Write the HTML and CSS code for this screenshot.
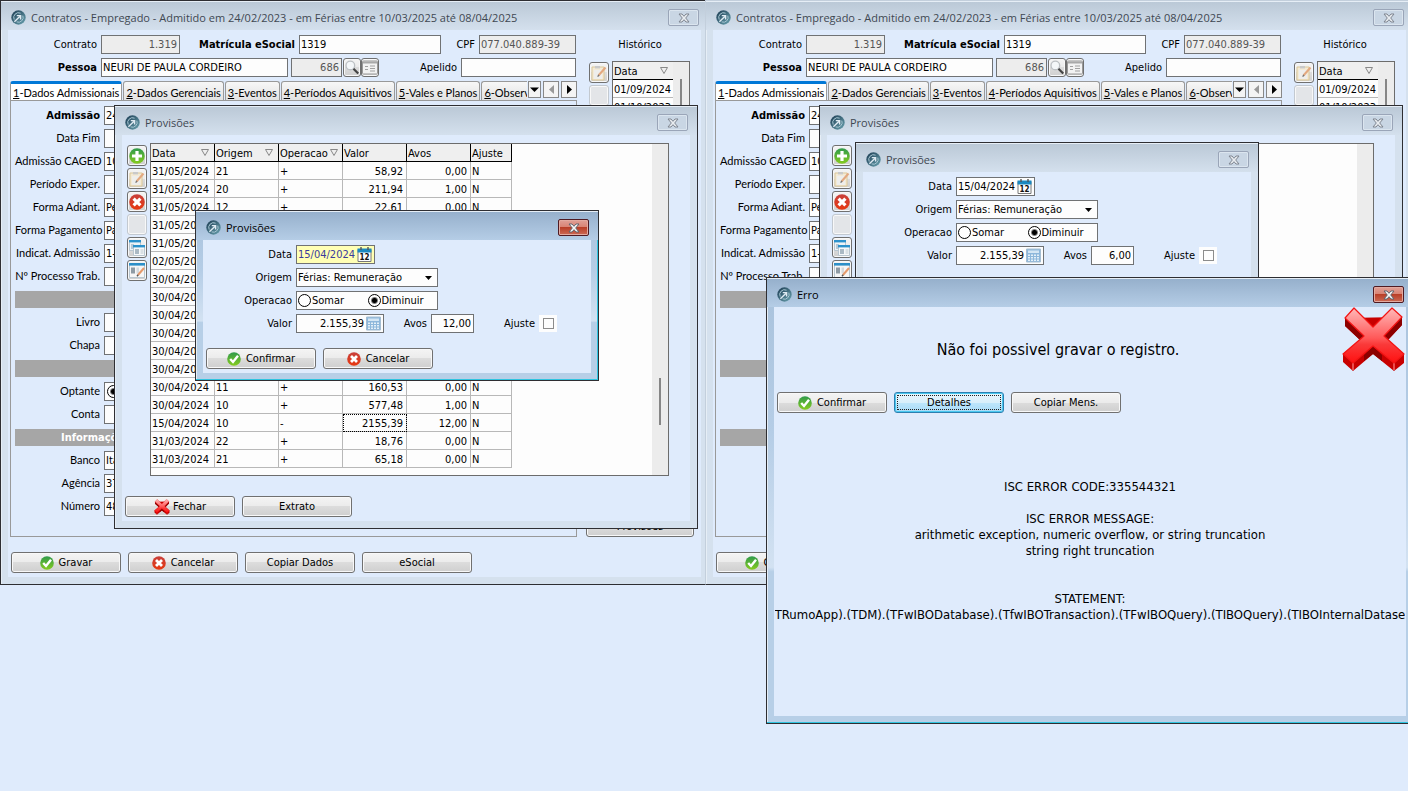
FILE: index.html
```
<!DOCTYPE html>
<html lang="pt-BR">
<head>
    <meta charset="UTF-8">
    <meta name="viewport" content="width=device-width, initial-scale=1.0">
    <title>Contratos - Provisões</title>
    <link rel="stylesheet" href="styles.css">
</head>
<body>
    <!-- shared icons -->
    <svg class="sprite" aria-hidden="true">
        <defs>
            <linearGradient id="g-logo" x1="0" y1="0" x2="1" y2="1"><stop offset="0" stop-color="#1c3b52"/><stop offset="1" stop-color="#6aa3b0"/></linearGradient>
            <linearGradient id="g-green" x1="0" y1="0" x2="0" y2="1"><stop offset="0" stop-color="#2f9a4c"/><stop offset="1" stop-color="#86cc1e"/></linearGradient>
            <linearGradient id="g-red" x1="0" y1="0" x2="0" y2="1"><stop offset="0" stop-color="#c8403c"/><stop offset="1" stop-color="#e8380f"/></linearGradient>
            <linearGradient id="g-cross" x1="0" y1="0" x2="0" y2="1"><stop offset="0" stop-color="#ffb9b9"/><stop offset="0.55" stop-color="#ff5858"/><stop offset="0.66" stop-color="#fa3a3a"/><stop offset="1" stop-color="#ff1010"/></linearGradient>
        </defs>
        <symbol id="i-logo" viewBox="0 0 15 15">
            <circle cx="7.5" cy="7.5" r="7.2" fill="url(#g-logo)"/>
            <path d="M3.2 9.600A4.800 4.800 0 0 1 9.600 3.200M11.800 5.600A4.800 4.800 0 0 1 5.600 11.900" fill="none" stroke="#a9c8d4" stroke-width="1"/>
            <path d="M3.400 11.800L8.800 6.400M5.800 5.600H9.600V9.400" fill="none" stroke="#dfeaf2" stroke-width="1.400"/>
        </symbol>
        <symbol id="i-close" viewBox="0 0 12 10">
            <path d="M1 1h3l2 2.3L8 1h3L7.7 5 11 9H8L6 6.7 4 9H1l3.3-4z" fill="#f6f6f6" stroke="#60646e" stroke-width="1"/>
        </symbol>
        <symbol id="i-ok" viewBox="0 0 14 14">
            <circle cx="7" cy="7" r="6.8" fill="url(#g-green)"/>
            <path d="M3.2 7L6 10L11 3.8" fill="none" stroke="#fff" stroke-width="2.4"/>
        </symbol>
        <symbol id="i-no" viewBox="0 0 14 14">
            <circle cx="7" cy="7" r="6.8" fill="url(#g-red)"/>
            <path d="M4 4l6 6M10 4l-6 6" stroke="#fff" stroke-width="2.8"/>
        </symbol>
        <symbol id="i-add" viewBox="0 0 14 14">
            <circle cx="7" cy="7" r="6.8" fill="url(#g-green)"/>
            <path d="M7 2.6v8.8M2.6 7h8.8" stroke="#fff" stroke-width="2.8"/>
        </symbol>
        <symbol id="i-note" viewBox="0 0 16 16">
            <path d="M1 2h12v13H1z" fill="#f3ead6" stroke="#dcc898"/>
            <path d="M4 1h5v2.4H4z" fill="#c9c9c9"/>
            <path d="M3 5h8v9H3z" fill="#eeeeec"/>
            <path d="M7.5 10.5L14.5 2.5" stroke="#e3a980" stroke-width="2"/>
            <path d="M6.6 11.6l1.4-1.6" stroke="#777" stroke-width="1.4"/>
        </symbol>
        <symbol id="i-windows" viewBox="0 0 16 16">
            <path d="M.5 .5h11v10H.5z" fill="#eef3f6" stroke="#b8c6d0"/><path d="M0 0h12v2.4H0z" fill="#2c92cc"/>
            <path d="M2 4h3v5H2z" fill="#b5c9d6"/>
            <path d="M4.500 5.500h11v10h-11z" fill="#f6f8f9" stroke="#b8c6d0"/><path d="M4 5h12v2.4H4z" fill="#2c92cc"/>
            <path d="M6 9h4v5H6z" fill="#aab9c4"/><path d="M11.500 9h3v5h-3z" fill="#d9e0e4"/>
        </symbol>
        <symbol id="i-form" viewBox="0 0 16 16">
            <path d="M.5 .5h15v14H.5z" fill="#f6f6f6" stroke="#b8c6d0"/><path d="M0 0h16v2.600H0z" fill="#2c8fc8"/>
            <path d="M2 4.500h4v6H2z" fill="#8f9ba4"/><path d="M7.500 4.500H10v6H7.500z" fill="#d5dade"/>
            <path d="M9 12L15 5" stroke="#e59a6c" stroke-width="2"/><path d="M8 13.200l1.200-1.400" stroke="#555" stroke-width="1.4"/>
        </symbol>
        <symbol id="i-search" viewBox="0 0 18 18">
            <circle cx="7" cy="6.500" r="5.200" fill="#f4f7f9" stroke="#bcc0c4" stroke-width="1.6"/>
            <path d="M10.800 10.400L16.500 16.300" stroke="#444" stroke-width="2.6"/>
        </symbol>
        <symbol id="i-card" viewBox="0 0 16 14">
            <rect x=".5" y=".5" width="15" height="13" rx="1" fill="#f2f2f2" stroke="#999"/><path d="M1 1h14v2H1z" fill="#a8a8a8"/>
            <path d="M3 6h3M3 9h3M8 5.500h5M8 8h5M8 10.500h5" stroke="#a0a0a0"/>
        </symbol>
        <symbol id="i-calendar" viewBox="0 0 14 15">
            <path d="M.5 2.500h13v12H.5z" fill="#fff" stroke="#777"/><path d="M0 1.500h14v4H0z" fill="#1b88c0"/>
            <path d="M3.500 0v3M10.500 0v3" stroke="#555" stroke-width="1.4"/>
            <text x="7" y="13" text-anchor="middle" font-family="DejaVu Sans Condensed" font-size="8" font-weight="bold" fill="#111">12</text>
        </symbol>
        <symbol id="i-calc" viewBox="0 0 15 14">
            <path d="M.5 .5h14v13H.5z" fill="#8db7db" stroke="#a4bdd2"/><path d="M2 2h11v2.500H2z" fill="#d4e6f4"/>
            <path d="M2 6h2v1.500H2zM5 6h2v1.500H5zM8 6h2v1.500H8zM11 6h2v1.500h-2zM2 8.500h2V10H2zM5 8.500h2V10H5zM8 8.500h2V10H8zM11 8.500h2V10h-2zM2 11h2v1.500H2zM5 11h2v1.500H5zM8 11h2v1.500H8zM11 11h2v1.500h-2z" fill="#e4f0f8"/>
        </symbol>
        <symbol id="i-filter" viewBox="0 0 8 7">
            <path d="M.5 .5h7L4 6.500z" fill="none" stroke="#888"/>
        </symbol>
        <symbol id="i-cross" viewBox="0 0 63 65">
            <path d="M3 11v8l15 14L1 47v8l10 9 20-17 21 17 10-8v-9L46 33l14-15v-8z" fill="#c80000"/>
            <path d="M3 11v8l15 14 4-4zM60 10v8L46 33l-4-4zM31 39l-9 9v6l9-7 9 7v-6z" fill="#8c0000"/>
            <path d="M11 56v7M52 56v7" stroke="#ff8080" stroke-width="1.200"/>
            <path d="M12 1L31 20 50 1l10 9-18 19 20 18-10 9-21-17-20 17-10-9 21-18L3 11z" fill="url(#g-cross)" stroke="#f41414" stroke-width="1.200" stroke-linejoin="round"/>
        </symbol>
    </svg>

    <main class="desktop">

        <!-- left: contract -->
        <section class="window contract contract-a">
            <header class="title-bar">
                <svg class="logo"><use href="#i-logo"/></svg>
                <h1>Contratos - Empregado - Admitido em 24/02/2023 - em Férias entre 10/03/2025 até 08/04/2025</h1>
                <button class="close" aria-label="Fechar"><svg><use href="#i-close"/></svg></button>
            </header>
            <div class="client">
                <div class="columns">
                    <div class="main-col">
                        <div class="row">
                            <label class="w-first" for="a-contrato">Contrato</label>
                            <input class="w-79 num" id="a-contrato" value="1.319" readonly>
                            <label class="bold grow" for="a-matricula">Matrícula eSocial</label>
                            <input class="w-142" id="a-matricula" value="1319">
                            <label class="w-cpf" for="a-cpf">CPF</label>
                            <input class="w-97" id="a-cpf" value="077.040.889-39" readonly>
                        </div>
                        <div class="row">
                            <label class="w-first bold" for="a-pessoa">Pessoa</label>
                            <input class="w-187" id="a-pessoa" value="NEURI DE PAULA CORDEIRO">
                            <input class="w-51 num code" aria-label="Código da pessoa" value="686" readonly>
                            <button class="mini" aria-label="Pesquisar"><svg><use href="#i-search"/></svg></button>
                            <button class="mini" aria-label="Cadastro"><svg><use href="#i-card"/></svg></button>
                            <label class="grow" for="a-apelido">Apelido</label>
                            <input class="w-115" id="a-apelido">
                        </div>
                        <nav class="tabs">
                            <button class="tab active"><u>1</u>-Dados Admissionais</button>
                            <button class="tab"><u>2</u>-Dados Gerenciais</button>
                            <button class="tab"><u>3</u>-Eventos</button>
                            <button class="tab"><u>4</u>-Períodos Aquisitivos</button>
                            <button class="tab"><u>5</u>-Vales e Planos</button>
                            <button class="tab cut"><u>6</u>-Observ</button>
                            <button class="tab-arrow" aria-label="Lista de abas"><svg viewBox="0 0 9 9"><path d="M0 2.500h9L4.500 7z"/></svg></button>
                            <button class="tab-arrow wide off" aria-label="Anterior"><svg viewBox="0 0 9 9"><path d="M7 0v9L2 4.500z"/></svg></button>
                            <button class="tab-arrow wide" aria-label="Próxima"><svg viewBox="0 0 9 9"><path d="M2 0v9l5-4.500z"/></svg></button>
                        </nav>
                        <div class="page">
                            <div class="row"><label class="bold" for="a-adm">Admissão</label><input id="a-adm" value="24/02/2023"></div>
                            <div class="row"><label for="a-fim">Data Fim</label><input id="a-fim"></div>
                            <div class="row"><label for="a-caged">Admissão CAGED</label><input id="a-caged" value="10"></div>
                            <div class="row"><label for="a-exper">Período Exper.</label><input id="a-exper"></div>
                            <div class="row"><label for="a-adiant">Forma Adiant.</label><input id="a-adiant" value="Pe"></div>
                            <div class="row"><label for="a-pag">Forma Pagamento</label><input id="a-pag" value="Pa"></div>
                            <div class="row"><label for="a-indic">Indicat. Admissão</label><input id="a-indic" value="1-"></div>
                            <div class="row"><label for="a-proc">Nº Processo Trab.</label><input id="a-proc"></div>
                            <div class="band"></div>
                            <div class="row"><label for="a-livro">Livro</label><input id="a-livro"></div>
                            <div class="row"><label for="a-chapa">Chapa</label><input id="a-chapa"></div>
                            <div class="band"></div>
                            <div class="row"><label for="a-optante">Optante</label><span class="radio-box"><input type="radio" id="a-optante" checked></span></div>
                            <div class="row"><label for="a-conta">Conta</label><input id="a-conta"></div>
                            <div class="band">Informações</div>
                            <div class="row"><label for="a-banco">Banco</label><input id="a-banco" value="Ita"></div>
                            <div class="row"><label for="a-agencia">Agência</label><input id="a-agencia" value="37"></div>
                            <div class="row"><label for="a-numero">Número</label><input id="a-numero" value="48"></div>
                        </div>
                    </div>
                    <aside class="side-col">
                        <h2>Histórico</h2>
                        <div class="history">
                            <div class="tools">
                                <button class="tool" aria-label="Editar"><svg><use href="#i-note"/></svg></button>
                                <button class="tool off" aria-label="Vazio" disabled></button>
                            </div>
                            <div class="panel">
                                <table>
                                    <tr><th>Data <svg><use href="#i-filter"/></svg></th></tr>
                                    <tr><td>01/09/2024</td></tr>
                                    <tr><td>01/10/2023</td></tr>
                                </table>
                                <div class="scroll"><span></span></div>
                            </div>
                        </div>
                        <button class="btn full">Provisões</button>
                    </aside>
                </div>
                <footer class="actions">
                    <button class="btn"><svg><use href="#i-ok"/></svg>Gravar</button>
                    <button class="btn"><svg><use href="#i-no"/></svg>Cancelar</button>
                    <button class="btn">Copiar Dados</button>
                    <button class="btn">eSocial</button>
                </footer>
            </div>
        </section>

        <!-- left: list of provisions -->
        <section class="window list list-a">
            <header class="title-bar">
                <svg class="logo"><use href="#i-logo"/></svg>
                <h1>Provisões</h1>
                <button class="close" aria-label="Fechar"><svg><use href="#i-close"/></svg></button>
            </header>
            <div class="client">
                <div class="list-body">
                    <div class="tools">
                        <button class="tool" aria-label="Incluir"><svg><use href="#i-add"/></svg></button>
                        <button class="tool" aria-label="Editar"><svg><use href="#i-note"/></svg></button>
                        <button class="tool" aria-label="Excluir"><svg><use href="#i-no"/></svg></button>
                        <button class="tool off" aria-label="Vazio" disabled></button>
                        <button class="tool" aria-label="Janelas"><svg><use href="#i-windows"/></svg></button>
                        <button class="tool" aria-label="Formulário"><svg><use href="#i-form"/></svg></button>
                    </div>
                    <div class="panel">
                        <table class="grid">
                            <thead>
                                <tr>
                                    <th>Data <svg><use href="#i-filter"/></svg></th>
                                    <th>Origem <svg><use href="#i-filter"/></svg></th>
                                    <th class="tight">Operacao <svg><use href="#i-filter"/></svg></th>
                                    <th>Valor</th>
                                    <th>Avos</th>
                                    <th class="short">Ajuste</th>
                                </tr>
                            </thead>
                            <tbody>
                                <tr><td>31/05/2024</td><td>21</td><td>+</td><td>58,92</td><td>0,00</td><td>N</td></tr>
                                <tr><td>31/05/2024</td><td>20</td><td>+</td><td>211,94</td><td>1,00</td><td>N</td></tr>
                                <tr><td>31/05/2024</td><td>12</td><td>+</td><td>22,61</td><td>0,00</td><td>N</td></tr>
                                <tr><td>31/05/2024</td><td></td><td></td><td></td><td></td><td></td></tr>
                                <tr><td>31/05/2024</td><td></td><td></td><td></td><td></td><td></td></tr>
                                <tr><td>02/05/2024</td><td></td><td></td><td></td><td></td><td></td></tr>
                                <tr><td>30/04/2024</td><td></td><td></td><td></td><td></td><td></td></tr>
                                <tr><td>30/04/2024</td><td></td><td></td><td></td><td></td><td></td></tr>
                                <tr><td>30/04/2024</td><td></td><td></td><td></td><td></td><td></td></tr>
                                <tr><td>30/04/2024</td><td></td><td></td><td></td><td></td><td></td></tr>
                                <tr><td>30/04/2024</td><td></td><td></td><td></td><td></td><td></td></tr>
                                <tr><td>30/04/2024</td><td></td><td></td><td></td><td></td><td></td></tr>
                                <tr><td>30/04/2024</td><td>11</td><td>+</td><td>160,53</td><td>0,00</td><td>N</td></tr>
                                <tr><td>30/04/2024</td><td>10</td><td>+</td><td>577,48</td><td>1,00</td><td>N</td></tr>
                                <tr><td>15/04/2024</td><td>10</td><td>-</td><td class="current">2155,39</td><td>12,00</td><td>N</td></tr>
                                <tr><td>31/03/2024</td><td>22</td><td>+</td><td>18,76</td><td>0,00</td><td>N</td></tr>
                                <tr><td>31/03/2024</td><td>21</td><td>+</td><td>65,18</td><td>0,00</td><td>N</td></tr>
                            </tbody>
                        </table>
                        <div class="scroll low"><span></span></div>
                    </div>
                </div>
                <footer class="actions">
                    <button class="btn near"><svg class="big"><use href="#i-cross"/></svg>Fechar</button>
                    <button class="btn">Extrato</button>
                </footer>
            </div>
        </section>

        <!-- left: edit dialog -->
        <section class="window dialog dialog-a focused">
            <header class="title-bar">
                <svg class="logo"><use href="#i-logo"/></svg>
                <h1>Provisões</h1>
                <button class="close" aria-label="Fechar"><svg><use href="#i-close"/></svg></button>
            </header>
            <div class="client">
                <div class="row">
                    <label class="w-label" for="a-data">Data</label>
                    <div class="combo w-79 editing"><input id="a-data" value="15/04/2024"><svg><use href="#i-calendar"/></svg></div>
                </div>
                <div class="row">
                    <label class="w-label" for="a-origem">Origem</label>
                    <select class="w-142" id="a-origem"><option>Férias: Remuneração</option></select>
                </div>
                <div class="row">
                    <span class="w-label text">Operacao</span>
                    <div class="radios w-142">
                        <label><input type="radio" name="a-op">Somar</label>
                        <label><input type="radio" name="a-op" checked>Diminuir</label>
                    </div>
                </div>
                <div class="row">
                    <label class="w-label" for="a-valor">Valor</label>
                    <div class="combo w-88"><input class="num" id="a-valor" value="2.155,39"><svg><use href="#i-calc"/></svg></div>
                    <label class="w-avos" for="a-avos">Avos</label>
                    <input class="w-43 num" id="a-avos" value="12,00">
                    <label class="w-ajuste" for="a-ajuste">Ajuste</label>
                    <span class="check"><input type="checkbox" id="a-ajuste"></span>
                </div>
                <footer class="actions">
                    <button class="btn"><svg><use href="#i-ok"/></svg>Confirmar</button>
                    <button class="btn"><svg><use href="#i-no"/></svg>Cancelar</button>
                </footer>
            </div>
        </section>

        <!-- right: contract -->
        <section class="window contract contract-b">
            <header class="title-bar">
                <svg class="logo"><use href="#i-logo"/></svg>
                <h1>Contratos - Empregado - Admitido em 24/02/2023 - em Férias entre 10/03/2025 até 08/04/2025</h1>
                <button class="close" aria-label="Fechar"><svg><use href="#i-close"/></svg></button>
            </header>
            <div class="client">
                <div class="columns">
                    <div class="main-col">
                        <div class="row">
                            <label class="w-first" for="b-contrato">Contrato</label>
                            <input class="w-79 num" id="b-contrato" value="1.319" readonly>
                            <label class="bold grow" for="b-matricula">Matrícula eSocial</label>
                            <input class="w-142" id="b-matricula" value="1319">
                            <label class="w-cpf" for="b-cpf">CPF</label>
                            <input class="w-97" id="b-cpf" value="077.040.889-39" readonly>
                        </div>
                        <div class="row">
                            <label class="w-first bold" for="b-pessoa">Pessoa</label>
                            <input class="w-187" id="b-pessoa" value="NEURI DE PAULA CORDEIRO">
                            <input class="w-51 num code" aria-label="Código da pessoa" value="686" readonly>
                            <button class="mini" aria-label="Pesquisar"><svg><use href="#i-search"/></svg></button>
                            <button class="mini" aria-label="Cadastro"><svg><use href="#i-card"/></svg></button>
                            <label class="grow" for="b-apelido">Apelido</label>
                            <input class="w-115" id="b-apelido">
                        </div>
                        <nav class="tabs">
                            <button class="tab active"><u>1</u>-Dados Admissionais</button>
                            <button class="tab"><u>2</u>-Dados Gerenciais</button>
                            <button class="tab"><u>3</u>-Eventos</button>
                            <button class="tab"><u>4</u>-Períodos Aquisitivos</button>
                            <button class="tab"><u>5</u>-Vales e Planos</button>
                            <button class="tab cut"><u>6</u>-Observ</button>
                            <button class="tab-arrow" aria-label="Lista de abas"><svg viewBox="0 0 9 9"><path d="M0 2.500h9L4.500 7z"/></svg></button>
                            <button class="tab-arrow wide off" aria-label="Anterior"><svg viewBox="0 0 9 9"><path d="M7 0v9L2 4.500z"/></svg></button>
                            <button class="tab-arrow wide" aria-label="Próxima"><svg viewBox="0 0 9 9"><path d="M2 0v9l5-4.500z"/></svg></button>
                        </nav>
                        <div class="page">
                            <div class="row"><label class="bold" for="b-adm">Admissão</label><input id="b-adm" value="24/02/2023"></div>
                            <div class="row"><label for="b-fim">Data Fim</label><input id="b-fim"></div>
                            <div class="row"><label for="b-caged">Admissão CAGED</label><input id="b-caged" value="10"></div>
                            <div class="row"><label for="b-exper">Período Exper.</label><input id="b-exper"></div>
                            <div class="row"><label for="b-adiant">Forma Adiant.</label><input id="b-adiant" value="Pe"></div>
                            <div class="row"><label for="b-pag">Forma Pagamento</label><input id="b-pag" value="Pa"></div>
                            <div class="row"><label for="b-indic">Indicat. Admissão</label><input id="b-indic" value="1-"></div>
                            <div class="row"><label for="b-proc">Nº Processo Trab.</label><input id="b-proc"></div>
                            <div class="band"></div>
                            <div class="row"></div>
                            <div class="row"></div>
                            <div class="band"></div>
                            <div class="row"></div>
                            <div class="row"></div>
                            <div class="band"></div>
                            <div class="row"></div>
                            <div class="row"></div>
                            <div class="row"></div>
                        </div>
                    </div>
                    <aside class="side-col">
                        <h2>Histórico</h2>
                        <div class="history">
                            <div class="tools">
                                <button class="tool" aria-label="Editar"><svg><use href="#i-note"/></svg></button>
                                <button class="tool off" aria-label="Vazio" disabled></button>
                            </div>
                            <div class="panel">
                                <table>
                                    <tr><th>Data <svg><use href="#i-filter"/></svg></th></tr>
                                    <tr><td>01/09/2024</td></tr>
                                    <tr><td>01/10/2023</td></tr>
                                </table>
                                <div class="scroll"><span></span></div>
                            </div>
                        </div>
                    </aside>
                </div>
                <footer class="actions">
                    <button class="btn"><svg><use href="#i-ok"/></svg>Gravar</button>
                </footer>
            </div>
        </section>

        <!-- right: list of provisions -->
        <section class="window list list-b">
            <header class="title-bar">
                <svg class="logo"><use href="#i-logo"/></svg>
                <h1>Provisões</h1>
                <button class="close" aria-label="Fechar"><svg><use href="#i-close"/></svg></button>
            </header>
            <div class="client">
                <div class="list-body">
                    <div class="tools">
                        <button class="tool" aria-label="Incluir"><svg><use href="#i-add"/></svg></button>
                        <button class="tool" aria-label="Editar"><svg><use href="#i-note"/></svg></button>
                        <button class="tool" aria-label="Excluir"><svg><use href="#i-no"/></svg></button>
                        <button class="tool off" aria-label="Vazio" disabled></button>
                        <button class="tool" aria-label="Janelas"><svg><use href="#i-windows"/></svg></button>
                        <button class="tool" aria-label="Formulário"><svg><use href="#i-form"/></svg></button>
                    </div>
                    <div class="panel">
                        <div class="scroll low"><span></span></div>
                    </div>
                </div>
            </div>
        </section>

        <!-- right: edit dialog -->
        <section class="window dialog dialog-b">
            <header class="title-bar">
                <svg class="logo"><use href="#i-logo"/></svg>
                <h1>Provisões</h1>
                <button class="close" aria-label="Fechar"><svg><use href="#i-close"/></svg></button>
            </header>
            <div class="client">
                <div class="row">
                    <label class="w-label" for="b-data">Data</label>
                    <div class="combo w-79"><input id="b-data" value="15/04/2024"><svg><use href="#i-calendar"/></svg></div>
                </div>
                <div class="row">
                    <label class="w-label" for="b-origem">Origem</label>
                    <select class="w-142" id="b-origem"><option>Férias: Remuneração</option></select>
                </div>
                <div class="row">
                    <span class="w-label text">Operacao</span>
                    <div class="radios w-142">
                        <label><input type="radio" name="b-op">Somar</label>
                        <label><input type="radio" name="b-op" checked>Diminuir</label>
                    </div>
                </div>
                <div class="row">
                    <label class="w-label" for="b-valor">Valor</label>
                    <div class="combo w-88"><input class="num" id="b-valor" value="2.155,39"><svg><use href="#i-calc"/></svg></div>
                    <label class="w-avos" for="b-avos">Avos</label>
                    <input class="w-43 num" id="b-avos" value="6,00">
                    <label class="w-ajuste" for="b-ajuste">Ajuste</label>
                    <span class="check"><input type="checkbox" id="b-ajuste"></span>
                </div>
            </div>
        </section>

        <!-- right: error -->
        <section class="window error focused">
            <header class="title-bar">
                <svg class="logo"><use href="#i-logo"/></svg>
                <h1>Erro</h1>
                <button class="close" aria-label="Fechar"><svg><use href="#i-close"/></svg></button>
            </header>
            <div class="client">
                <div class="message">
                    <p>Não foi possivel gravar o registro.</p>
                    <svg><use href="#i-cross"/></svg>
                </div>
                <div class="actions">
                    <button class="btn"><svg><use href="#i-ok"/></svg>Confirmar</button>
                    <button class="btn selected">Detalhes</button>
                    <button class="btn">Copiar Mens.</button>
                </div>
                <div class="details">
                    <p>ISC ERROR CODE:335544321</p>
                    <p>ISC ERROR MESSAGE:<br>arithmetic exception, numeric overflow, or string truncation<br>string right truncation</p>
                    <p class="statement">STATEMENT:</p>
                    <div class="trace"><span>TRumoApp).(TDM).(TFwIBODatabase).(TfwIBOTransaction).(TFwIBOQuery).(TIBOQuery).(TIBOInternalDatase</span></div>
                </div>
            </div>
        </section>
    </main>
</body>
</html>
```
FILE: styles.css
```
* {
    box-sizing: border-box;
}
body {
    margin: 0;
    background-color: #dfebfc;
    font-family: "DejaVu Sans Condensed", "DejaVu Sans", sans-serif;
    font-size: 11px;
    color: #000;
}
button, input, select {
    font: inherit;
    color: inherit;
    margin: 0;
    padding: 0;
    border-radius: 0;
}
h1, h2, p {
    margin: 0;
    font-size: inherit;
    font-weight: normal;
}
.sprite {
    position: absolute;
    width: 0;
    height: 0;
}
.desktop {
    position: relative;
    min-height: 100vh;
    overflow: hidden;
}

/* windows */
.window {
    position: absolute;
    display: flex;
    flex-direction: column;
    padding: 0 7px 7px;
    border: 1px solid #2e2e32;
    background-color: #d5e1ee;
    box-shadow: inset 1px 1px 0 #e6eef6;
}
.title-bar {
    display: flex;
    align-items: center;
    height: 29px;
    margin: 0 -7px;
    padding: 4px 9px 0 10px;
    background: linear-gradient(#bac8d6, #d4e0ed);
    box-shadow: inset 0 1px 0 #e6eef6;
    font-family: "Open Sans", "Noto Sans", sans-serif;
    color: #3f4852;
}
.title-bar h1 {
    flex: 1;
    white-space: nowrap;
}
.logo {
    width: 15px;
    height: 15px;
    margin-right: 5px;
}
.close {
    display: flex;
    align-items: center;
    justify-content: center;
    width: 31px;
    height: 17px;
    border: 1px solid #9aa5b8;
    border-radius: 2px;
    background: #c9d6e4;
    box-shadow: inset 0 0 0 1px #dbe5ef;
}
.close svg {
    flex: none;
    width: 12px;
    height: 10px;
    opacity: 0.7;
}
.client {
    flex: 1;
    min-height: 0;
    background-color: #dfebfc;
}
.focused {
    background: linear-gradient(#a9c2dc, #b5cde6 35%, #d3e2f2 65%, #b7cfe7 66%);
    box-shadow: inset -1px -1px 0 #2fc4e0, inset 1px 1px 0 #e6eef6;
}
.focused .title-bar {
    background: linear-gradient(#95afcb, #b5cde6);
    color: #000;
}
.focused .close {
    border-color: #4f1a22;
    background: linear-gradient(#e0a097, #d98475 45%, #b93f28 50%, #cc6a55);
    box-shadow: inset 0 0 0 1px #e3aaa0;
}
.focused .close svg {
    opacity: 1;
}
.contract {
    width: 709px;
    height: 585px;
}
.contract-a {
    left: 0;
    top: 0;
}
.contract-b {
    left: 705px;
    top: 0;
    border-color: #c3cfdc;
    border-bottom-color: #2e2e32;
}
.list {
    width: 584px;
    height: 424px;
}
.list-a {
    left: 114px;
    top: 105px;
}
.list-b {
    left: 819px;
    top: 105px;
}
.dialog {
    width: 404px;
    height: 171px;
}
.dialog-a {
    left: 195px;
    top: 210px;
}
.dialog-b {
    left: 855px;
    top: 142px;
}
.error {
    left: 766px;
    top: 277px;
    width: 648px;
    height: 447px;
}

/* fields */
.row {
    display: flex;
    height: 19px;
    margin-bottom: 4px;
}
.row > label,
.row > .text {
    padding-right: 4px;
    line-height: 20px;
    text-align: right;
    white-space: nowrap;
}
.bold {
    font-weight: bold;
}
.grow {
    flex: 1;
}
.row > input,
.combo,
.radios,
.radio-box,
select {
    height: 19px;
    border: 1px solid #707274;
    background-color: #fdfdfd;
}
.row > input {
    padding: 0 1px 1px;
}
.row > .num {
    padding-right: 2px;
}
.row > input[readonly] {
    background-color: #ededed;
    color: #555;
}
.num {
    text-align: right;
}
.w-first { width: 91px; }
.w-43 { width: 43px; }
.w-51 { width: 51px; }
.w-79 { width: 79px; }
.w-88 { width: 88px; }
.w-97 { width: 97px; }
.w-115 { width: 115px; }
.w-142 { width: 142px; }
.w-187 { width: 187px; }
.w-cpf { width: 38px; }
.w-label { width: 90px; }
.w-avos { width: 47px; }
.w-ajuste { width: 65px; }
.code {
    margin-left: 3px;
    margin-right: 1px;
}
.combo {
    display: flex;
    align-items: center;
    padding: 0 2px 0 1px;
}
.combo input {
    flex: 1;
    min-width: 0;
    border: 0;
    background: none;
}
.combo svg {
    flex: none;
    width: 15px;
    height: 15px;
    margin-left: 2px;
}
.editing {
    background-color: #ffffb4;
    color: #3b3b9c;
}
select {
    appearance: none;
    padding: 0 1px;
    background: #fdfdfd url("data:image/svg+xml,%3Csvg xmlns='http://www.w3.org/2000/svg' width='7' height='4'%3E%3Cpath d='M0 0h7L3.5 4z'/%3E%3C/svg%3E") no-repeat right 5px center;
}
.radios {
    display: flex;
    padding-left: 1px;
}
.radios label {
    display: flex;
    align-items: center;
    gap: 1px;
    width: 70px;
}
input[type="radio"] {
    appearance: none;
    flex: none;
    width: 13px;
    height: 13px;
    border: 1px solid #000;
    border-radius: 50%;
    background-color: #fff;
}
input[type="radio"]:checked {
    background: radial-gradient(circle, #000 2px, #fff 4px);
}
.radio-box {
    display: flex;
    align-items: center;
    width: 80px;
    padding-left: 2px;
}
.check {
    display: flex;
    align-items: center;
    justify-content: center;
    width: 18px;
    height: 17px;
    margin-top: 1px;
    background-color: #fdfdfd;
}
.check input {
    appearance: none;
    width: 11px;
    height: 11px;
    border: 1px solid #8c8c8c;
}

/* buttons */
.btn,
.tool,
.mini {
    display: flex;
    align-items: center;
    justify-content: center;
    border: 1px solid #707070;
    border-radius: 3px;
    background: linear-gradient(#f4f4f4, #ebebeb 50%, #dcdcdc 50%, #cfcfcf);
    box-shadow: inset 0 0 0 1px #f8f8f8;
}
.btn {
    gap: 5px;
    width: 110px;
    height: 21px;
}
.btn svg {
    width: 14px;
    height: 14px;
}
.btn .big {
    width: 16px;
    height: 16px;
}
.near {
    gap: 3px;
}
.full {
    width: 108px;
}
.selected {
    border-color: #2c7fb0;
    background: linear-gradient(#e8f5fc, #d8effb 50%, #bee6fb 50%, #a8dbf7);
    box-shadow: inset 0 0 0 1px #48c8f0;
    outline: 1px dotted #222;
    outline-offset: -4px;
}
.actions {
    display: flex;
    gap: 7px;
}
.tools {
    display: flex;
    flex-direction: column;
    gap: 2px;
}
.tool {
    width: 20px;
    height: 21px;
}
.tool svg {
    width: 16px;
    height: 16px;
    flex: none;
}
.tool.off {
    border-color: #c3c9d0;
    background: #e3e5e8;
}
.mini {
    width: 18px;
    height: 19px;
}
.mini svg {
    width: 16px;
    height: 15px;
    flex: none;
}

/* contract */
.contract .client {
    padding: 5px 0 0 2px;
}
.columns {
    display: grid;
    grid-template-columns: 567px 108px;
    gap: 9px;
}
.main-col > .row {
    padding-right: 1px;
}
.tabs {
    display: flex;
    height: 19px;
    gap: 1px;
}
.tab {
    flex: none;
    padding: 2px 2px 0;
    border: 1px solid #999;
    border-bottom: 0;
    border-radius: 3px 3px 0 0;
    background: linear-gradient(#f7f7f7, #e2e2e2);
    font-family: Lato, sans-serif;
    white-space: nowrap;
}
.tab.active {
    border-top: 3px solid #0078d7;
    padding-top: 0;
    background: #fff;
}
.tab.cut {
    flex: 1;
    min-width: 0;
    overflow: hidden;
    border-right: 0;
    border-top-right-radius: 0;
    padding-right: 0;
    text-align: left;
}
.tab-arrow {
    display: flex;
    align-items: center;
    justify-content: center;
    flex: none;
    width: 13px;
    height: 17px;
    border: 1px solid #888;
    background: #f4f4f4;
}
.tab-arrow.wide {
    width: 16px;
    margin-left: 1px;
}
.tab-arrow svg {
    width: 9px;
    height: 9px;
    flex: none;
}
.tab-arrow.off {
    fill: #999;
}
.page {
    display: flex;
    flex-direction: column;
    height: 437px;
    padding: 5px 0 0 4px;
    border: 1px solid #999;
}
.page label {
    width: 89px;
    font-family: Lato, sans-serif;
}
.page .row > label {
    line-height: 18px;
}
.page .row > .bold {
    font-family: inherit;
    line-height: 20px;
}
.page .row > input {
    width: 80px;
}
.band {
    height: 17px;
    margin: 1px 4px 5px 0;
    padding-left: 46px;
    background-color: #a6a6a6;
    color: #fff;
    font-weight: bold;
    line-height: 18px;
}
.side-col {
    display: flex;
    flex-direction: column;
}
.side-col h2 {
    height: 26px;
    line-height: 20px;
    text-align: center;
}
.history {
    display: flex;
    flex: 1;
    gap: 3px;
    margin-bottom: 20px;
    padding: 0 4px 0 3px;
}
.history .tools {
    padding-top: 1px;
}
.contract .actions {
    padding: 15px 0 0 1px;
}

/* tables */
.panel {
    display: flex;
    flex: 1;
    justify-content: space-between;
    align-items: flex-start;
    border: 1px solid #6c6c6c;
    background-color: #fdfdfd;
}
.panel table {
    border-collapse: separate;
    border-spacing: 0;
    table-layout: fixed;
}
.panel th,
.panel td {
    height: 18px;
    padding: 2px 1px 0;
    border-bottom: 1px solid #b8b8b8;
    font-weight: normal;
    text-align: left;
    white-space: nowrap;
}
.panel th {
    border-bottom: 1px solid #000;
    background-color: #efefef;
}
.panel th svg {
    float: right;
    width: 8px;
    height: 7px;
    margin: 2px 4px 0 0;
}
.history table {
    width: 60px;
}
.grid {
    width: 361px;
}
.grid th,
.grid td {
    width: 64px;
    border-right: 1px solid #b8b8b8;
}
.panel .grid th {
    border-right-color: #000;
}
.panel .grid .tight {
    padding-right: 0;
}
.panel .grid .short {
    width: 41px;
}
.panel .grid td:nth-child(4),
.panel .grid td:nth-child(5) {
    padding-right: 3px;
    text-align: right;
}
.current {
    outline: 1px dotted #000;
    outline-offset: -1px;
}
.scroll {
    display: flex;
    justify-content: center;
    align-self: stretch;
    width: 16px;
    margin-left: auto;
    padding-top: 17px;
    background-color: #ececec;
}
.scroll span {
    width: 2px;
    height: 47px;
    background-color: #868686;
}
.scroll.low {
    padding-top: 234px;
}

/* list of provisions */
.list .client {
    padding: 8px 21px 0 3px;
}
.list-body {
    display: flex;
    gap: 3px;
    height: 333px;
    margin-bottom: 20px;
}
.list .tools {
    padding: 2px 0 0 2px;
}

/* edit dialog */
.dialog .client {
    padding: 5px 3px 0;
}
.dialog .actions {
    padding-top: 11px;
}

/* error */
.error .message {
    display: flex;
    align-items: flex-start;
}
.message p {
    flex: 1;
    padding-top: 33px;
    font-size: 16px;
    line-height: 20px;
    text-align: center;
}
.message svg {
    width: 63px;
    height: 65px;
    margin-right: 1px;
}
.error .actions {
    padding: 20px 3px 0;
}
.details {
    padding: 66px 1px 0;
    font-size: 13px;
    line-height: 16px;
    text-align: center;
}
.details p {
    margin-bottom: 16px;
}
.details .statement {
    margin: 32px 0 0;
}
.trace {
    display: flex;
    justify-content: center;
    overflow: hidden;
    white-space: nowrap;
}
```
